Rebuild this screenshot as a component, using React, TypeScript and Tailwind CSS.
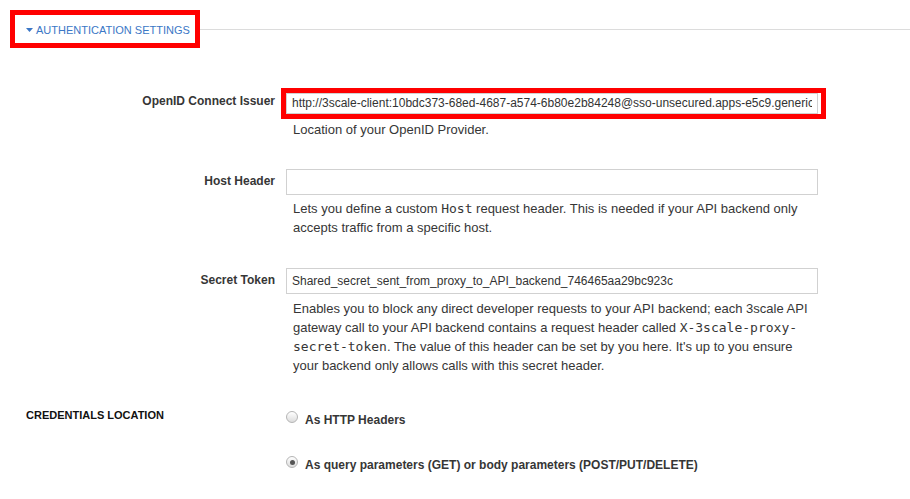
import React from "react";

const mono = "font-['DejaVu_Sans_Mono',monospace] leading-none";

function Radio({ checked }: { checked?: boolean }) {
  return (
    <div className="relative w-[12px] h-[12px] rounded-full border border-[#b5b5b5] bg-gradient-to-b from-[#ffffff] to-[#dcdcdc] shrink-0 flex items-center justify-center">
      {checked && <div className="w-[5px] h-[5px] rounded-full bg-[#555]" />}
    </div>
  );
}

export default function App() {
  return (
    <div className="w-[910px] h-[499px] bg-white overflow-hidden font-['Liberation_Sans',Arial,sans-serif] text-[#363636]">
      {/* Section header */}
      <div className="pt-[10px] flex items-center">
        <div className="ml-[10px] w-[190px] h-[38px] border-[5px] border-[#ff0000] flex items-center pl-[11px] pt-[2px] shrink-0">
          <svg width="7" height="4" viewBox="0 0 7 4" className="mr-[3px]">
            <path d="M0 0 L7 0 L3.5 4 Z" fill="#3b77c6" />
          </svg>
          <span className="text-[11px] text-[#3b77c6] leading-none">AUTHENTICATION SETTINGS</span>
        </div>
        <div className="flex-1 h-px bg-[#dcdcdc]" />
      </div>

      {/* OpenID Connect Issuer */}
      <div className="flex mt-[40px]">
        <div className="w-[275px] text-right text-[12px] font-bold leading-[14px] pt-[6px]">OpenID Connect Issuer</div>
        <div className="ml-[6px]">
          <div className="w-[545px] h-[31px] border-[5px] border-[#ff0000]">
            <div className="w-[532px] h-[21px] border border-[#d1d1d1] bg-white text-[12px] leading-[19px] pl-[5px] text-[#333]">
              <div className="w-[520px] overflow-hidden whitespace-nowrap">
                http://3scale-client:10bdc373-68ed-4687-a574-6b80e2b84248@sso-unsecured.apps-e5c9.generic.example.com
              </div>
            </div>
          </div>
          <div className="pl-[12px] text-[13px] leading-[19px] mt-px">Location of your OpenID Provider.</div>
        </div>
      </div>

      {/* Host Header */}
      <div className="flex mt-[30px]">
        <div className="w-[275px] text-right text-[12px] font-bold leading-[14px] pt-[5px]">Host Header</div>
        <div className="ml-[11px]">
          <div className="w-[532px] h-[26px] border border-[#d1d1d1] bg-white" />
          <div className="pl-[7px] w-[532px] text-[13px] leading-[19px] mt-[4px]">
            Lets you define a custom <span className={mono}>Host</span> request header. This is needed if your API backend only accepts traffic from a specific host.
          </div>
        </div>
      </div>

      {/* Secret Token */}
      <div className="flex mt-[31px]">
        <div className="w-[275px] text-right text-[12px] font-bold leading-[14px] pt-[5px]">Secret Token</div>
        <div className="ml-[11px]">
          <div className="w-[532px] h-[26px] border border-[#d1d1d1] bg-white text-[12px] leading-[24px] pl-[5px] text-[#333] whitespace-nowrap overflow-hidden">
            Shared_secret_sent_from_proxy_to_API_backend_746465aa29bc923c
          </div>
          <div className="pl-[7px] w-[532px] text-[13px] leading-[19px] mt-[5px]">
            Enables you to block any direct developer requests to your API backend; each 3scale API gateway call to your API backend contains a request header called <span className={mono}>X-3scale-proxy-secret-token</span>. The value of this header can be set by you here. It's up to you ensure your backend only allows calls with this secret header.
          </div>
        </div>
      </div>

      {/* Credentials location */}
      <div className="flex mt-[33px]">
        <div className="w-[286px] pl-[26px] text-[11px] font-bold text-[#111] leading-[13px] pt-px">CREDENTIALS LOCATION</div>
        <div className="flex flex-col">
          <div className="flex items-start">
            <div className="mt-[3px]"><Radio /></div>
            <span className="ml-[7px] text-[12px] font-bold leading-[14px] mt-[5px]">As HTTP Headers</span>
          </div>
          <div className="flex items-start mt-[26px]">
            <div className="mt-[3px]"><Radio checked /></div>
            <span className="ml-[7px] text-[12px] font-bold leading-[14px] mt-[5px]">As query parameters (GET) or body parameters (POST/PUT/DELETE)</span>
          </div>
        </div>
      </div>
    </div>
  );
}
